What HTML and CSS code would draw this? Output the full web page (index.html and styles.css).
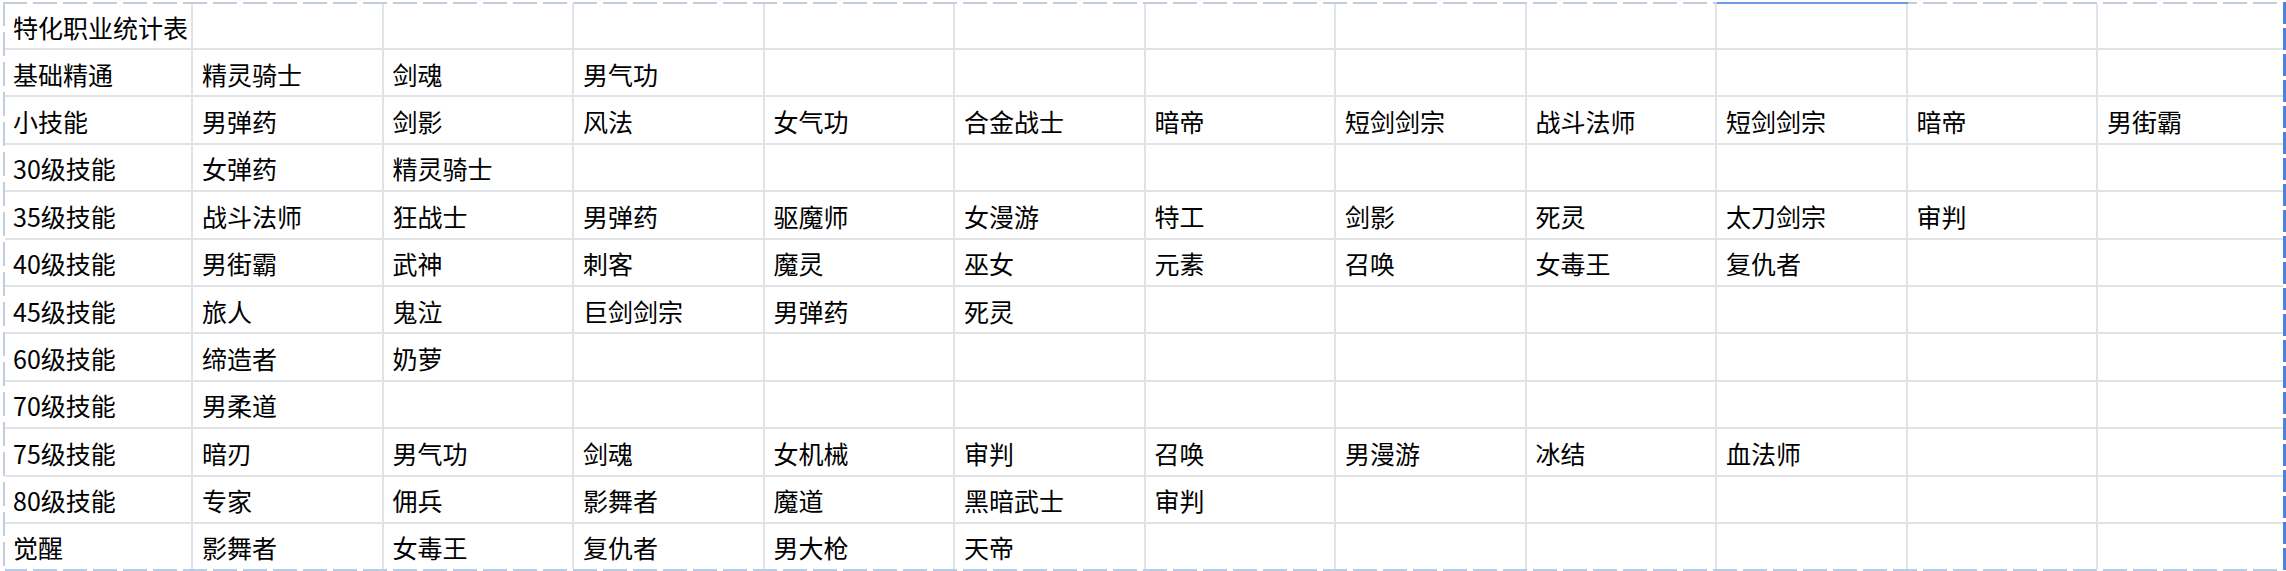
FILE: index.html
```html
<!DOCTYPE html>
<html lang="zh-CN">
<head>
<meta charset="utf-8">
<title>特化职业统计表</title>
<link rel="stylesheet" href="styles.css">
</head>
<body>
<div class="frame">
  <div class="sheet">
    <div class="cell">特化职业统计表</div><div class="cell"></div><div class="cell"></div><div class="cell"></div><div class="cell"></div><div class="cell"></div><div class="cell"></div><div class="cell"></div><div class="cell"></div><div class="cell sel-top"></div><div class="cell"></div><div class="cell last-col"></div>
    <div class="cell">基础精通</div><div class="cell">精灵骑士</div><div class="cell">剑魂</div><div class="cell">男气功</div><div class="cell"></div><div class="cell"></div><div class="cell"></div><div class="cell"></div><div class="cell"></div><div class="cell"></div><div class="cell"></div><div class="cell last-col"></div>
    <div class="cell">小技能</div><div class="cell">男弹药</div><div class="cell">剑影</div><div class="cell">风法</div><div class="cell">女气功</div><div class="cell">合金战士</div><div class="cell">暗帝</div><div class="cell">短剑剑宗</div><div class="cell">战斗法师</div><div class="cell">短剑剑宗</div><div class="cell">暗帝</div><div class="cell last-col">男街霸</div>
    <div class="cell">30级技能</div><div class="cell">女弹药</div><div class="cell">精灵骑士</div><div class="cell"></div><div class="cell"></div><div class="cell"></div><div class="cell"></div><div class="cell"></div><div class="cell"></div><div class="cell"></div><div class="cell"></div><div class="cell last-col"></div>
    <div class="cell">35级技能</div><div class="cell">战斗法师</div><div class="cell">狂战士</div><div class="cell">男弹药</div><div class="cell">驱魔师</div><div class="cell">女漫游</div><div class="cell">特工</div><div class="cell">剑影</div><div class="cell">死灵</div><div class="cell">太刀剑宗</div><div class="cell">审判</div><div class="cell last-col"></div>
    <div class="cell">40级技能</div><div class="cell">男街霸</div><div class="cell">武神</div><div class="cell">刺客</div><div class="cell">魔灵</div><div class="cell">巫女</div><div class="cell">元素</div><div class="cell">召唤</div><div class="cell">女毒王</div><div class="cell">复仇者</div><div class="cell"></div><div class="cell last-col"></div>
    <div class="cell">45级技能</div><div class="cell">旅人</div><div class="cell">鬼泣</div><div class="cell">巨剑剑宗</div><div class="cell">男弹药</div><div class="cell">死灵</div><div class="cell"></div><div class="cell"></div><div class="cell"></div><div class="cell"></div><div class="cell"></div><div class="cell last-col"></div>
    <div class="cell">60级技能</div><div class="cell">缔造者</div><div class="cell">奶萝</div><div class="cell"></div><div class="cell"></div><div class="cell"></div><div class="cell"></div><div class="cell"></div><div class="cell"></div><div class="cell"></div><div class="cell"></div><div class="cell last-col"></div>
    <div class="cell">70级技能</div><div class="cell">男柔道</div><div class="cell"></div><div class="cell"></div><div class="cell"></div><div class="cell"></div><div class="cell"></div><div class="cell"></div><div class="cell"></div><div class="cell"></div><div class="cell"></div><div class="cell last-col"></div>
    <div class="cell">75级技能</div><div class="cell">暗刃</div><div class="cell">男气功</div><div class="cell">剑魂</div><div class="cell">女机械</div><div class="cell">审判</div><div class="cell">召唤</div><div class="cell">男漫游</div><div class="cell">冰结</div><div class="cell">血法师</div><div class="cell"></div><div class="cell last-col"></div>
    <div class="cell">80级技能</div><div class="cell">专家</div><div class="cell">佣兵</div><div class="cell">影舞者</div><div class="cell">魔道</div><div class="cell">黑暗武士</div><div class="cell">审判</div><div class="cell"></div><div class="cell"></div><div class="cell"></div><div class="cell"></div><div class="cell last-col"></div>
    <div class="cell last-row">觉醒</div><div class="cell last-row">影舞者</div><div class="cell last-row">女毒王</div><div class="cell last-row">复仇者</div><div class="cell last-row">男大枪</div><div class="cell last-row">天帝</div><div class="cell last-row"></div><div class="cell last-row"></div><div class="cell last-row"></div><div class="cell last-row"></div><div class="cell last-row"></div><div class="cell last-row last-col"></div>
  </div>
</div>
</body>
</html>
```

FILE: styles.css
```css
html, body {
  margin: 0;
  padding: 0;
  background: #ffffff;
}
body {
  width: 2286px;
  height: 571px;
  overflow: hidden;
  font-family: "Noto Sans CJK SC", "Microsoft YaHei", sans-serif;
  color: #000000;
}
.frame {
  margin: 2px 0 0 3px;
  width: 2283px;
  height: 569px;
  box-sizing: border-box;
  padding: 2px 3px 2px 2px;
  background:
    repeating-linear-gradient(to bottom, #4c82dd 0 22px, #ffffff 22px 26px) right top / 3px 100% no-repeat,
    repeating-linear-gradient(to right, #c4cedb 0 24px, #ffffff 24px 30px) left top / 100% 2px no-repeat,
    repeating-linear-gradient(to bottom, #c3cedd 0 24px, #ffffff 24px 30px) left top / 2px 100% no-repeat,
    repeating-linear-gradient(to right, #b8cbe8 0 24px, #ffffff 24px 30px) left bottom / 100% 2px no-repeat,
    #ffffff;
}
.sheet {
  display: grid;
  grid-template-columns: 188px repeat(10, 190.5px) 1fr;
  grid-template-rows: 46px repeat(10, 47.4px) 1fr;
  height: 100%;
}
.cell {
  box-sizing: border-box;
  border-right: 2px solid #e1e3e7;
  border-bottom: 2px solid #e1e3e7;
  display: flex;
  align-items: center;
  padding: 3px 0 0 9px;
  font-size: 25px;
  line-height: 1;
  white-space: nowrap;
}
.cell:nth-child(12n+1) {
  padding-left: 8px;
}
.last-col {
  border-right: none;
}
.last-row {
  border-bottom: none;
}
.sel-top {
  box-shadow: 0 -2px 0 #6f9be3;
}
```
